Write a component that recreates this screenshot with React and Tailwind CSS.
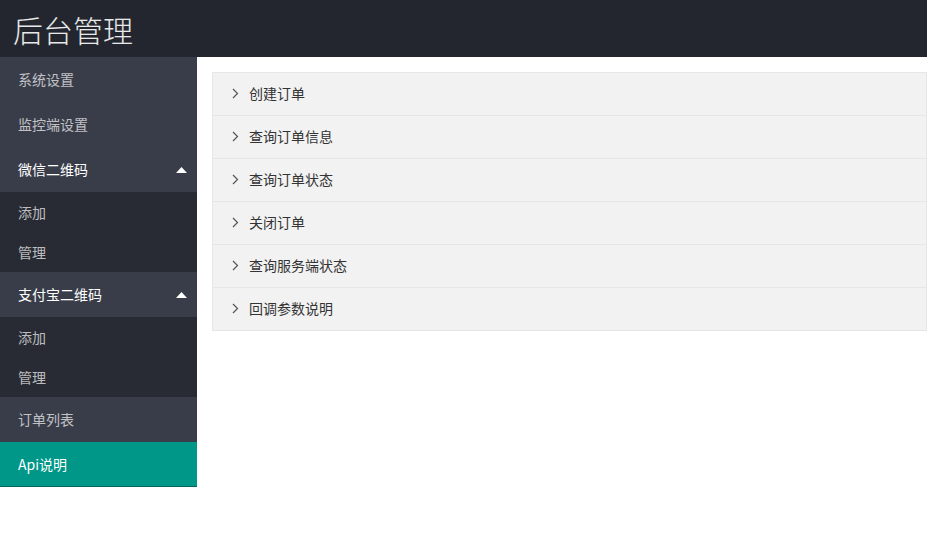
import React from "react";

const font = { fontFamily: '"Noto Sans CJK SC", "Noto Sans", sans-serif' };

const menu = [
  { label: "系统设置" },
  { label: "监控端设置" },
  { label: "微信二维码", open: true, children: ["添加", "管理"] },
  { label: "支付宝二维码", open: true, children: ["添加", "管理"] },
  { label: "订单列表" },
  { label: "Api说明", active: true },
];

const apis = ["创建订单", "查询订单信息", "查询订单状态", "关闭订单", "查询服务端状态", "回调参数说明"];

const Caret = () => (
  <svg width="11" height="6" viewBox="0 0 11 6" className="ml-auto">
    <polygon points="5.5,0 11,6 0,6" fill="#fff" />
  </svg>
);

const Chevron = () => (
  <svg width="7" height="11" viewBox="0 0 7 11" className="mr-[10px]">
    <polyline points="1,1 5.5,5.5 1,10" fill="none" stroke="#555" strokeWidth="1.2" />
  </svg>
);

export default function App() {
  return (
    <div className="w-[927px] h-[533px] overflow-hidden bg-white flex flex-col" style={font}>
      <div className="h-[57px] bg-[#23262e] flex items-center pl-[13px] shrink-0">
        <span className="text-[30px] font-light text-white/90 leading-none">后台管理</span>
      </div>
      <div className="flex flex-1 items-start">
        <div className="w-[197px] shrink-0 bg-[#393d49] text-[14px]">
          {menu.map((m) => (
            <div key={m.label}>
              <div
                className={`h-[45px] flex items-center pl-[18px] pr-[10px] ${
                  m.active ? "bg-[#009688] text-white border-b border-[#00675e]" : m.open ? "text-white" : "text-white/70"
                }`}
              >
                {m.label}
                {m.open && <Caret />}
              </div>
              {m.children && (
                <div className="bg-[#282b33]">
                  {m.children.map((c) => (
                    <div key={c} className="h-[40px] flex items-center pl-[18px] text-white/70">
                      {c}
                    </div>
                  ))}
                </div>
              )}
            </div>
          ))}
        </div>
        <div className="flex-1 pl-[15px] pt-[15px]">
          <div className="border border-[#e6e6e6] border-t-0">
            {apis.map((a) => (
              <div
                key={a}
                className="h-[43px] border-t border-[#e6e6e6] bg-[#f2f2f2] flex items-center pl-[19px] pb-[1px] text-[14px] text-[#333]"
              >
                <Chevron />
                {a}
              </div>
            ))}
          </div>
        </div>
      </div>
    </div>
  );
}
